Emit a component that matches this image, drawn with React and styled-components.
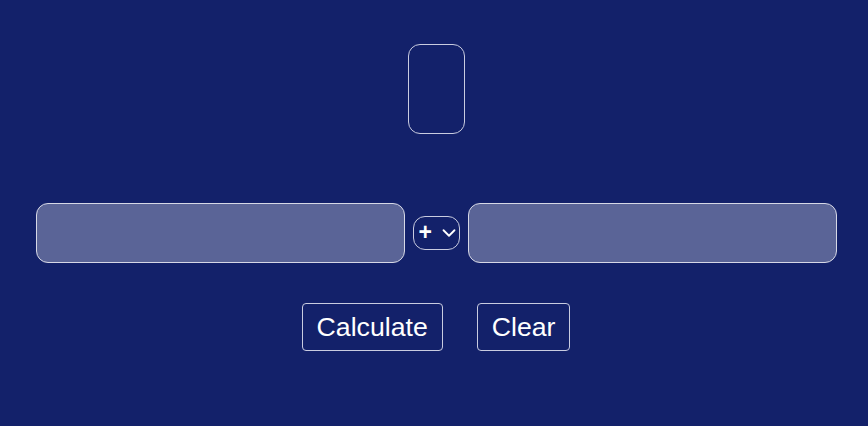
import React from 'react';
import styled, { createGlobalStyle } from 'styled-components';
import { ChevronDown } from 'lucide-react';

const GlobalStyle = createGlobalStyle`
  html, body {
    margin: 0;
    padding: 0;
    background: #13216a;
    font-family: "Liberation Sans", Arial, sans-serif;
  }
`;

const Page = styled.div`
  width: 868px;
  height: 426px;
  background: #13216a;
  display: flex;
  flex-direction: column;
  align-items: center;
  padding-top: 44px;
  box-sizing: border-box;
`;

const Result = styled.div`
  width: 57px;
  height: 90px;
  box-sizing: border-box;
  border: 1px solid #c9cce0;
  border-radius: 12px;
  margin-left: 5px;
`;

const InputRow = styled.div`
  display: flex;
  align-items: center;
  gap: 8px;
  margin-top: 69px;
  margin-left: 4px;
`;

const NumberInput = styled.input`
  width: 369px;
  height: 60px;
  box-sizing: border-box;
  border: 1px solid #d6d8e6;
  border-radius: 12px;
  background: rgba(255, 255, 255, 0.3);
  color: #fff;
  font-size: 24px;
  font-family: inherit;
  padding: 0 12px;
  outline: none;
`;

const SelectWrap = styled.div`
  position: relative;
  width: 47px;
  height: 34px;
`;

const OperatorSelect = styled.select`
  appearance: none;
  -webkit-appearance: none;
  width: 100%;
  height: 100%;
  box-sizing: border-box;
  border: 1px solid #c9cce0;
  border-radius: 12px;
  background: transparent;
  color: #fff;
  font-size: 23px;
  font-weight: bold;
  font-family: inherit;
  padding: 0 0 2px 5px;
  outline: none;

  option {
    color: #000;
  }
`;

const Chevron = styled(ChevronDown)`
  position: absolute;
  right: 0;
  top: 6px;
  color: #fff;
  pointer-events: none;
`;

const ButtonRow = styled.div`
  display: flex;
  gap: 34px;
  margin-top: 40px;
  margin-left: 4px;
`;

const ActionButton = styled.button`
  height: 48px;
  box-sizing: border-box;
  padding: 0 14px;
  border: 1px solid #c9cce0;
  border-radius: 4px;
  background: transparent;
  color: #fff;
  font-size: 26.67px;
  font-family: inherit;
  cursor: pointer;
`;

export default function App() {
  return (
    <Page>
      <GlobalStyle />
      <Result />
      <InputRow>
        <NumberInput type="number" />
        <SelectWrap>
          <OperatorSelect defaultValue="+">
            <option value="+">+</option>
            <option value="-">-</option>
            <option value="*">*</option>
            <option value="/">/</option>
          </OperatorSelect>
          <Chevron size={22} strokeWidth={2} />
        </SelectWrap>
        <NumberInput type="number" />
      </InputRow>
      <ButtonRow>
        <ActionButton>Calculate</ActionButton>
        <ActionButton>Clear</ActionButton>
      </ButtonRow>
    </Page>
  );
}
